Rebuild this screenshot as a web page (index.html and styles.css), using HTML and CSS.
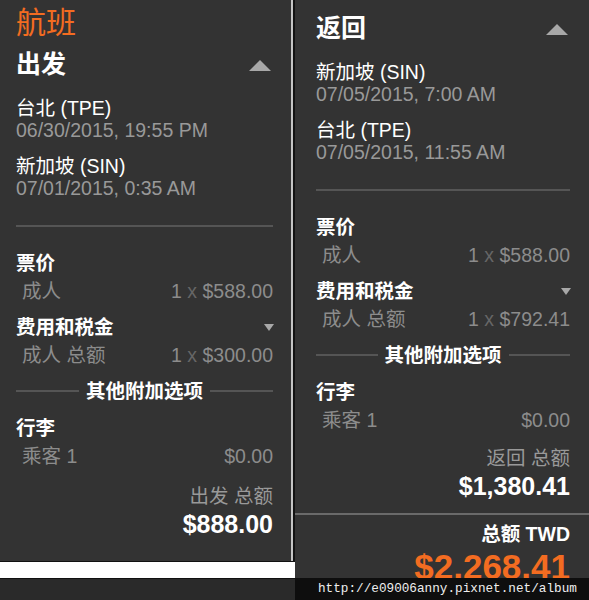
FILE: index.html
```html
<!DOCTYPE html>
<html lang="zh-CN">
<head>
  <meta charset="UTF-8" />
  <meta name="viewport" content="width=device-width, initial-scale=1.0" />
  <title>航班 - 出发 / 返回</title>
  <link rel="stylesheet" href="styles.css">
</head>
<body>
  <div class="page">
    <div class="col-out">
      <section class="panel panel-out">
        <h1 class="flight-title">航班</h1>
        <div class="leg-head">
          <h2>出发</h2>
          <span class="caret-up"></span>
        </div>
        <div class="stop">
          <div class="city">台北 (TPE)</div>
          <div class="time">06/30/2015, 19:55 PM</div>
        </div>
        <div class="stop">
          <div class="city">新加坡 (SIN)</div>
          <div class="time">07/01/2015, 0:35 AM</div>
        </div>
        <div class="rule"></div>
        <div class="group-title">票价</div>
        <div class="line"><span>成人</span><span>1 <i>x</i> $588.00</span></div>
        <div class="group-title">费用和税金 <span class="caret-down"></span></div>
        <div class="line"><span>成人 总额</span><span>1 <i>x</i> $300.00</span></div>
        <div class="divider"><span>其他附加选项</span></div>
        <div class="group-title">行李</div>
        <div class="line"><span>乘客 1</span><span>$0.00</span></div>
        <div class="subtotal">
          <div class="sub-label">出发 总额</div>
          <div class="sub-amount">$888.00</div>
        </div>
      </section>
      <div class="strip"></div>
    </div>

    <section class="panel panel-back">
      <div class="leg-head">
        <h2>返回</h2>
        <span class="caret-up"></span>
      </div>
      <div class="stop">
        <div class="city">新加坡 (SIN)</div>
        <div class="time">07/05/2015, 7:00 AM</div>
      </div>
      <div class="stop">
        <div class="city">台北 (TPE)</div>
        <div class="time">07/05/2015, 11:55 AM</div>
      </div>
      <div class="rule"></div>
      <div class="group-title">票价</div>
      <div class="line"><span>成人</span><span>1 <i>x</i> $588.00</span></div>
      <div class="group-title">费用和税金 <span class="caret-down"></span></div>
      <div class="line"><span>成人 总额</span><span>1 <i>x</i> $792.41</span></div>
      <div class="divider"><span>其他附加选项</span></div>
      <div class="group-title">行李</div>
      <div class="line"><span>乘客 1</span><span>$0.00</span></div>
      <div class="subtotal">
        <div class="sub-label">返回 总额</div>
        <div class="sub-amount">$1,380.41</div>
      </div>
      <div class="grand">
        <div class="grand-label">总额 TWD</div>
        <div class="grand-amount">$2,268.41</div>
      </div>
      <div class="watermark">http://e09006anny.pixnet.net/album</div>
    </section>
  </div>
</body>
</html>
```

FILE: styles.css
```css
* {
  box-sizing: border-box;
}
body {
  margin: 0;
  background-color: #2a2a2a;
  color: #fff;
  font-family: "Liberation Sans", Arial, "Noto Sans CJK SC", sans-serif;
  font-size: 19.5px;
}
.page {
  display: flex;
  height: 600px;
  overflow: hidden;
}
.col-out {
  width: 295px;
  display: flex;
  flex-direction: column;
}
.panel {
  background-color: #333;
}
.panel-out {
  width: 295px;
  height: 561px;
  padding: 5px 20px 0 16px;
  border-right: 2px solid #111;
  box-shadow: inset -2px 0 #c4c4c4;
}
.strip {
  height: 18px;
  background-color: #fff;
  border-top: 1px solid #111;
  border-bottom: 1px solid #111;
}
.panel-back {
  flex: 1;
  position: relative;
  padding: 13px 19px 0 21px;
}
.flight-title {
  margin: 0 0 8px;
  font-size: 30px;
  line-height: 36px;
  font-weight: normal;
  color: #f36c21;
}
.leg-head {
  display: flex;
  justify-content: space-between;
  align-items: center;
  height: 30px;
}
.leg-head h2 {
  margin: 0;
  font-size: 25px;
  line-height: 30px;
  font-weight: bold;
}
.caret-up {
  width: 0;
  height: 0;
  margin: 2px 2px 0 0;
  border-left: 11px solid transparent;
  border-right: 11px solid transparent;
  border-bottom: 11px solid #a8a8a8;
}
.stop {
  margin-top: 14px;
}
.leg-head + .stop {
  margin-top: 17.5px;
}
.city {
  line-height: 22px;
}
.time {
  line-height: 22px;
  color: #999;
}
.rule {
  height: 2px;
  margin: 26px 0 22.5px;
  background-color: #555;
}
.group-title {
  display: flex;
  justify-content: space-between;
  align-items: center;
  line-height: 28px;
  font-weight: bold;
}
.line + .group-title {
  margin-top: 7px;
}
.caret-down {
  width: 0;
  height: 0;
  margin-right: -1px;
  border-left: 5.5px solid transparent;
  border-right: 5.5px solid transparent;
  border-top: 7px solid #a8a8a8;
}
.line {
  display: flex;
  justify-content: space-between;
  padding-left: 6px;
  line-height: 29px;
  color: #8c8c8c;
}
.line i {
  font-style: normal;
  color: #666;
}
.divider {
  display: flex;
  align-items: center;
  gap: 7px;
  margin: 7px 0 9px;
  line-height: 28px;
  font-weight: bold;
}
.divider::before,
.divider::after {
  content: "";
  flex: 1;
  height: 2px;
  background-color: #555;
}
.subtotal {
  margin-top: 12px;
  text-align: right;
}
.panel-back .subtotal {
  margin-top: 10px;
}
.sub-label {
  line-height: 27px;
  color: #999;
}
.sub-amount {
  font-size: 25px;
  line-height: 28px;
  font-weight: bold;
}
.grand {
  margin: 13px -19px 0 -21px;
  padding: 5px 19px 0 0;
  border-top: 2px solid #6a6a6a;
  text-align: right;
}
.grand-label {
  line-height: 28px;
  font-weight: bold;
}
.grand-amount {
  margin-top: -1px;
  font-size: 35px;
  line-height: 40px;
  font-weight: bold;
  color: #f36c21;
}
.watermark {
  position: absolute;
  left: 0;
  right: 0;
  bottom: 0;
  height: 22px;
  padding-left: 23px;
  background-color: #0e0e0e;
  color: #eee;
  font-family: "Liberation Mono", monospace;
  font-size: 12.7px;
  line-height: 22px;
}
```
